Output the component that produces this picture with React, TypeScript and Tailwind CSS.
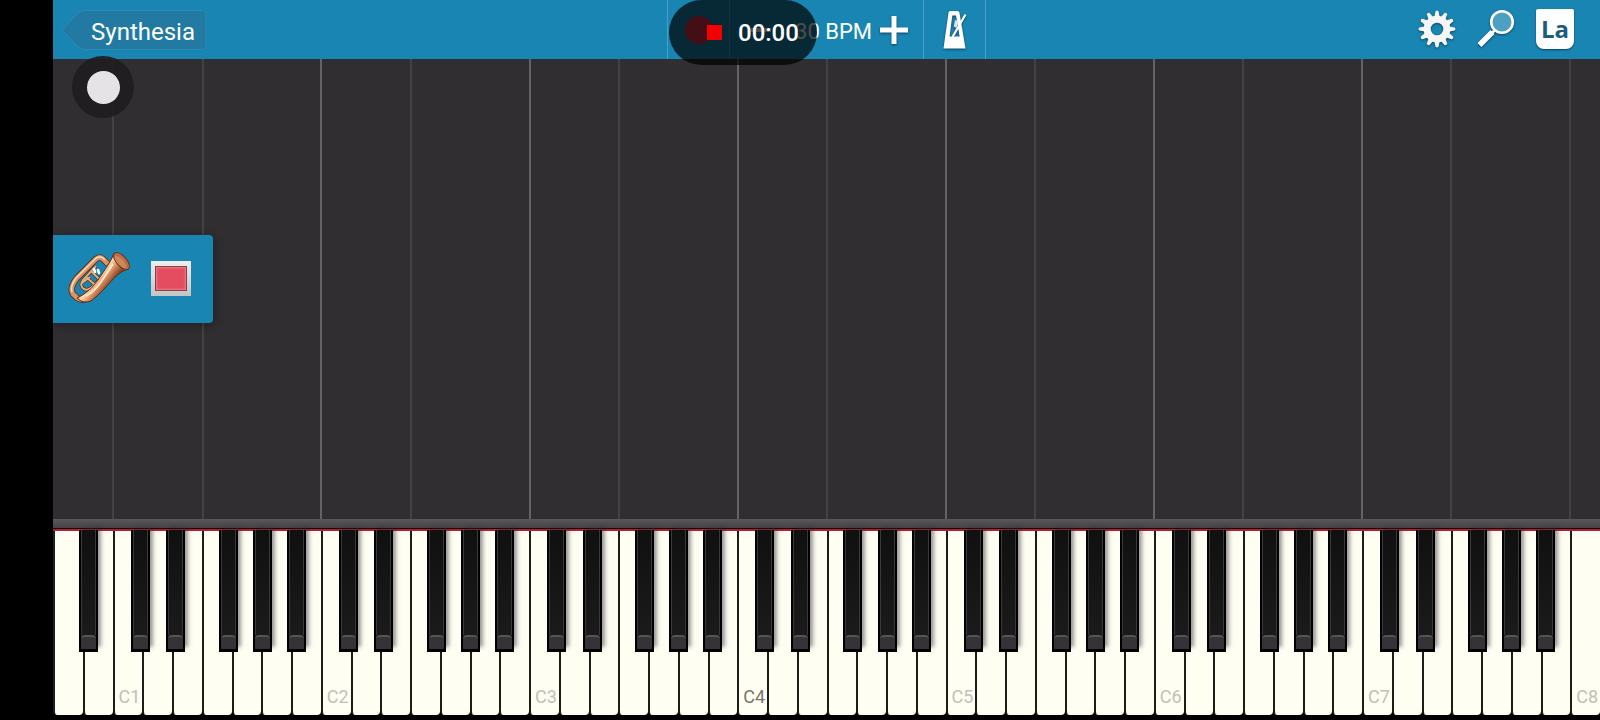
import React, { useState } from "react";

const NOTES = ["C", "D", "E", "F", "G", "A", "B"];

// Where the sharp sits over its white key
const SHARP_OFFSETS: Record<string, string> = {
  C: "left-[61%]",
  D: "left-[80%]",
  F: "left-[57%]",
  G: "left-[72%]",
  A: "left-[86%]",
};

interface PianoKey {
  id: string;
  note: string;
  octave: number;
  sharp: boolean;
}

// 88 keys, A0 to C8: 52 of them white
const KEYS: PianoKey[] = Array.from({ length: 52 }, (_, i) => {
  const n = i + 5;
  const note = NOTES[n % 7];
  const octave = Math.floor(n / 7);
  return {
    id: `${note}${octave}`,
    note,
    octave,
    sharp: note in SHARP_OFFSETS && i < 51,
  };
});

// Guide line at the left of each C and F
const laneBorder = (key: PianoKey): string => {
  if (key.note === "C" && key.octave > 1 && key.octave < 8) {
    return "border-l-2 border-[#646264]";
  }
  if (key.note === "C" || (key.note === "F" && key.octave > 0)) {
    return "border-l-2 border-[#434143]";
  }
  return "";
};

const GearIcon = () => (
  <svg viewBox="0 0 38 38" className="size-[38px] drop-shadow-[0_1px_1px_rgba(0,0,0,0.5)]" aria-hidden="true">
    {Array.from({ length: 12 }, (_, i) => (
      <path
        key={i}
        d="M16.2 8 L17.4 1.4 Q19 -0.4 20.6 1.4 L21.8 8 Z"
        fill="#f6f6f6"
        transform={`rotate(${i * 30} 19 19)`}
      />
    ))}
    <circle cx="19" cy="19" r="9.8" fill="none" stroke="#f6f6f6" strokeWidth="7" />
  </svg>
);

const SearchIcon = () => (
  <svg viewBox="0 0 40 40" className="size-10 drop-shadow-[0_1px_1px_rgba(0,0,0,0.5)]" aria-hidden="true">
    <path d="M3.5 36 L16.5 23" stroke="#fff" strokeWidth="5.5" />
    <path d="M16 24 L20 20" stroke="#fff" strokeWidth="2.5" />
    <circle cx="26" cy="13" r="10.8" fill="#4e9fc4" stroke="#fff" strokeWidth="2.6" />
  </svg>
);

const MetronomeIcon = () => (
  <svg viewBox="0 0 24 38" className="h-[38px] w-6 drop-shadow-[0_1px_1px_rgba(0,0,0,0.5)]" aria-hidden="true">
    <path
      fillRule="evenodd"
      fill="#fff"
      d="M5.5 1.5 Q5.8 0 7.2 0 H14.5 Q16 0 16.4 1.5 L22.5 37.5 H0.5 Z M9.3 4.5 L6.6 25.5 H16.6 L13 4.5 Z"
    />
    <path d="M9.5 26 L22.5 3.5" stroke="#fff" strokeWidth="2.2" />
    <path d="M12 9 L15.5 10.5 L13.5 17 L10.8 15.5 Z" fill="#d9e8ef" />
  </svg>
);

const TubaIcon = () => (
  <svg viewBox="0 0 64 54" className="h-[54px] w-16" aria-hidden="true">
    <defs>
      <linearGradient id="brass" gradientUnits="userSpaceOnUse" x1="28" y1="20" x2="43" y2="32">
        <stop offset="0" stopColor="#c47b4c" />
        <stop offset="0.3" stopColor="#fbdcb4" />
        <stop offset="0.6" stopColor="#dc9563" />
        <stop offset="1" stopColor="#8a4426" />
      </linearGradient>
    </defs>
    <path d="M40 13 L35 8 Q32 5 28 8 L9 27 Q1 37 5 43 L9 47 Q16 51 22 45" fill="none" stroke="#5b2c1b" strokeWidth="6.4" />
    <path d="M40 13 L35 8 Q32 5 28 8 L9 27 Q1 37 5 43 L9 47 Q16 51 22 45" fill="none" stroke="#d99364" strokeWidth="4.6" />
    <path d="M37 9 L35 7 Q32 5 28 7 L8 27 Q2 35 4 41" fill="none" stroke="#fbe0c0" strokeWidth="1.4" />
    <path d="M28 15 L15 29 Q11 35 16 38 Q20 40 24 36 L31 29 M23 20 L31 28 M18 26 L26 33 M14 32 L22 26" fill="none" stroke="#5b2c1b" strokeWidth="3.4" />
    <path d="M28 15 L15 29 Q11 35 16 38 Q20 40 24 36 L31 29 M23 20 L31 28 M18 26 L26 33 M14 32 L22 26" fill="none" stroke="#e3b080" strokeWidth="2" />
    <path
      d="M46 2 Q44 8 40 14 L30 29 Q24 38 16 43 L9 47 Q15 53 23 50 Q30 45 37 37 L47 26 Q53 20 60 18 Z"
      fill="url(#brass)"
      stroke="#5b2c1b"
      strokeWidth="1"
    />
    <path d="M18 45 Q26 41 33 31 L45 13" fill="none" stroke="#ffe9cd" strokeWidth="1.8" />
    <ellipse cx="53.5" cy="10" rx="5" ry="10.5" transform="rotate(-42 53.5 10)" fill="#b96d48" stroke="#6a3420" strokeWidth="1" />
    <ellipse cx="52.5" cy="11" rx="3" ry="8" transform="rotate(-42 52.5 11)" fill="#cf8659" />
    <path d="M26 18 L27 21 M30 19 L31 22" stroke="#fff" strokeWidth="2.6" strokeLinecap="round" />
  </svg>
);

export default function App() {
  const [bpm, setBpm] = useState(30);
  const [recording, setRecording] = useState(true);
  const [pressed, setPressed] = useState<string | null>(null);

  return (
    <div className="flex min-h-screen flex-col overflow-hidden bg-black pl-[53px] font-['Roboto','Liberation_Sans',sans-serif] select-none">
      {/* Toolbar */}
      <header className="relative grid h-[59px] grid-cols-[1fr_auto_1fr] items-center bg-[#1985b3] text-white">
        <div className="pl-2">
          <button className="relative flex h-10 w-[146px] items-center justify-center pl-[18px] text-[24px] leading-10">
            <svg viewBox="0 0 146 40" className="absolute inset-0 size-full" aria-hidden="true">
              <path
                d="M1 20 L17 3 Q20 0.5 24 0.5 H140 Q145 0.5 145 5 V35 Q145 39.5 140 39.5 H24 Q20 39.5 17 37 Z"
                fill="#227aa3"
                stroke="#2b8bb5"
              />
            </svg>
            <span className="relative pt-1">Synthesia</span>
          </button>
        </div>

        <div className="flex h-full border-l border-[#4ba0c6]">
          <button aria-label="Record" className="flex w-[62px] items-center justify-center border-r border-[#4ba0c6]">
            <span className="size-7 rounded-full bg-[#e0304c]" />
          </button>
          <div className="flex w-[194px] items-center justify-end gap-2 border-r border-[#4ba0c6] pr-[15px] text-[22px]">
            <button aria-label="Slower" className="mr-4 flex h-7 w-5 items-center" onClick={() => setBpm(bpm - 1)}>
              <span className="h-1 w-full bg-white" />
            </button>
            <span className="pt-1">{bpm} BPM</span>
            <button aria-label="Faster" className="flex size-7 items-center justify-center" onClick={() => setBpm(bpm + 1)}>
              <svg viewBox="0 0 28 28" className="size-7 drop-shadow-[0_1px_1px_rgba(0,0,0,0.5)]" aria-hidden="true">
                <path d="M14 0 V28 M0 14 H28" stroke="#fff" strokeWidth="5" />
              </svg>
            </button>
          </div>
          <button aria-label="Metronome" className="flex w-[62px] items-center justify-center border-r border-[#4ba0c6]">
            <MetronomeIcon />
          </button>
        </div>

        <div className="flex items-center justify-end gap-5 pr-[26px] pb-0.5">
          <button aria-label="Settings">
            <GearIcon />
          </button>
          <button aria-label="Search">
            <SearchIcon />
          </button>
          <button
            aria-label="Note labels"
            className="flex h-10 w-[38px] items-end justify-center rounded-t-xs rounded-b-lg bg-white pb-1 font-['Open_Sans',sans-serif] text-[24px] leading-8 font-bold text-[#1d5c7d] shadow-[0_1px_2px_rgba(0,0,0,0.5)]"
          >
            La
          </button>
        </div>

        {/* Screen recorder pill */}
        <button
          aria-label="Stop recording"
          onClick={() => setRecording(!recording)}
          className="absolute top-0 left-[616px] z-20 flex h-[65px] w-[148px] items-center gap-4 rounded-full bg-black/70 pl-[38px] text-[24px] font-medium"
        >
          <span className="size-[15px] bg-[#f40000]" />
          <span>00:00</span>
        </button>
      </header>

      {/* Falling notes area */}
      <main className="relative flex min-h-[460px] grow bg-[#302e30] pl-px">
        {KEYS.map((key) => (
          <div key={key.id} className={`flex-1 ${laneBorder(key)}`} />
        ))}

        <div className="absolute -top-[3px] left-[19px] flex size-[62px] items-center justify-center rounded-full bg-[#1f1d1f]/90">
          <div className="size-[33px] rounded-full bg-[#e6e3e7]" />
        </div>

        <div className="absolute top-44 left-0 flex h-[88px] w-40 items-center gap-[19px] rounded-r-sm bg-[#1985b3] pb-0.5 pl-[15px] shadow-[2px_2px_10px_rgba(0,0,0,0.3)]">
          <button aria-label="Instrument">
            <TubaIcon />
          </button>
          <button
            aria-label="Hand color"
            className="flex h-[35px] w-10 items-center justify-center bg-linear-to-b from-[#eeeeee] to-[#c4c4c4]"
          >
            <span className="h-[25px] w-8 border border-[#85404a] bg-[#e44d5f] shadow-[inset_0_0_2px_1px_#e8808c]" />
          </button>
        </div>
      </main>

      {/* Rail above the keys */}
      <div className="h-[9px] bg-linear-to-b from-[#5a585a] to-[#454345]" />
      <div className="h-px bg-black" />
      <div className="h-0.5 bg-[#c01a30]" />

      <ul className="mb-[5px] flex h-[184px]">
        {KEYS.map((key) => (
          <li key={key.id} className="relative flex-1">
            <button
              aria-label={key.id}
              onPointerDown={() => setPressed(key.id)}
              onPointerUp={() => setPressed(null)}
              className={`flex h-full w-full items-end overflow-hidden rounded-b-sm border-l-2 border-[#1c1c18] pb-1 pl-1 text-[18px] leading-7 ${
                pressed === key.id ? "bg-[#e44d5f]" : "bg-[#fefef2]"
              } ${key.octave === 4 ? "text-[#77756c]" : "text-[#c3c1b7]"}`}
            >
              {key.note === "C" ? key.id : ""}
            </button>
            {key.sharp && (
              <button
                aria-label={`${key.note}#${key.octave}`}
                className={`absolute -top-px z-10 flex h-[122px] w-[64%] flex-col border-x-2 border-b-3 border-black bg-linear-to-b from-[#111011] to-[#1d1c1d] shadow-[4px_-4px_4px_-1px_rgba(60,50,60,0.5)] ${SHARP_OFFSETS[key.note]}`}
              >
                <span className="w-full grow border-x border-[#3a393a]" />
                <span className="h-[14px] w-full rounded-t-sm border-t-2 border-[#555355] bg-[#353335]" />
              </button>
            )}
          </li>
        ))}
      </ul>
    </div>
  );
}
